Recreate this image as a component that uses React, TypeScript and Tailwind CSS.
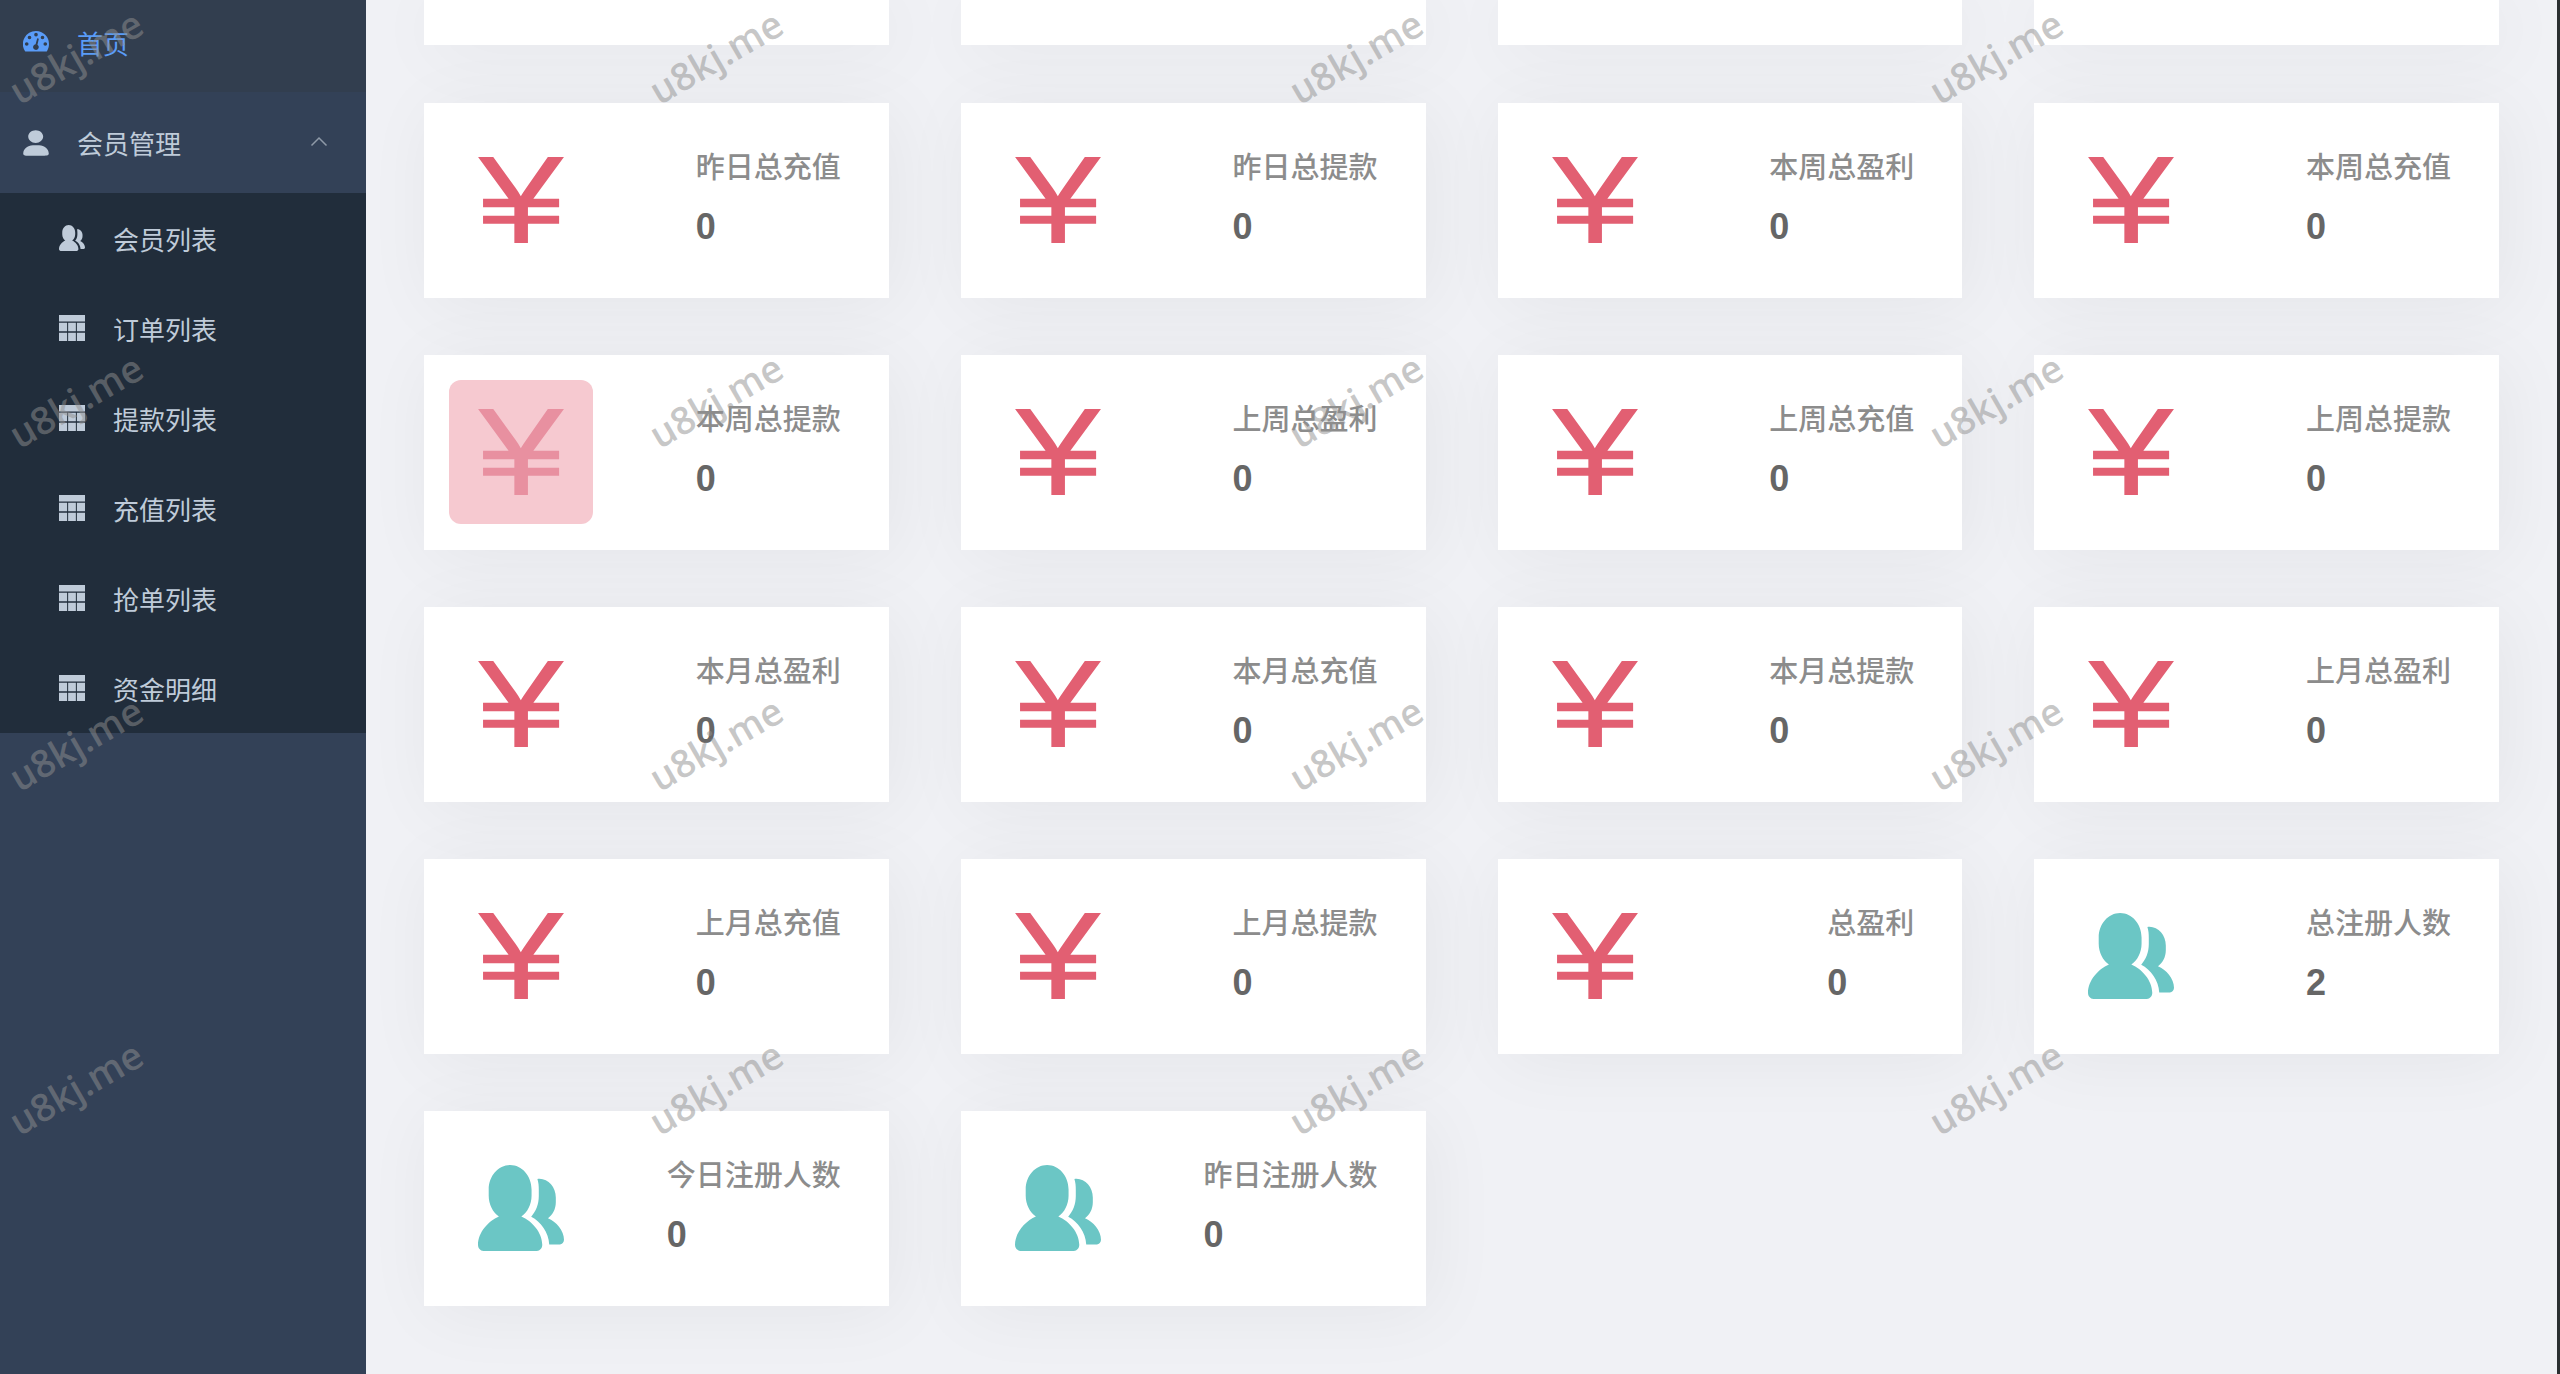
import type { ReactNode } from "react";

type IconProps = { className?: string };

function DashboardIcon({ className }: IconProps) {
  return (
    <svg viewBox="0 0 128 128" className={className} aria-hidden="true">
      <path
        fill="currentColor"
        fillRule="evenodd"
        d="M64 10a64 64 0 0 1 64 64c0 12.600-3.500 24.500-10.200 35-.9 1.400-2.200 2.100-3.900 2.100H14.100c-1.700 0-3-.7-3.900-2.100A64 64 0 0 1 64 10zM18.300 65a9 9 0 1 0 0 18 9 9 0 0 0 0-18zM32 33a9 9 0 1 0 0 18 9 9 0 0 0 0-18zM64 19a9 9 0 1 0 0 18 9 9 0 0 0 0-18zM96 33a9 9 0 1 0 0 18 9 9 0 0 0 0-18zM109.700 65a9 9 0 1 0 0 18 9 9 0 0 0 0-18zM70 46l-8 29a14 14 0 1 0 9 2L78 48z"
      />
    </svg>
  );
}

function UserIcon({ className }: IconProps) {
  return (
    <svg viewBox="0 0 130 130" className={className} aria-hidden="true">
      <path
        fill="currentColor"
        d="M63.444 64.996c20.633 0 37.359-14.308 37.359-31.953 0-17.649-16.726-31.952-37.359-31.952-20.631 0-37.360 14.303-37.360 31.952 0 17.645 16.729 31.953 37.360 31.953zM80.570 75.650H49.434c-26.652 0-48.260 18.477-48.260 41.270v2.664c0 9.316 21.608 9.325 48.260 9.325H80.570c26.649 0 48.256-.344 48.256-9.325v-2.663c0-22.794-21.605-41.271-48.256-41.271z"
      />
    </svg>
  );
}

function PeoplesIcon({ className }: IconProps) {
  return (
    <svg viewBox="0 0 128 128" className={className} aria-hidden="true">
      <path
        fill="currentColor"
        d="M95.648 118.762c0 5.035-3.563 9.121-7.979 9.121H7.980c-4.416 0-7.979-4.086-7.979-9.121C0 100.519 15.408 83.470 31.152 76.750c-9.099-6.430-15.216-17.863-15.216-30.987v-9.128c0-20.160 14.293-36.518 31.893-36.518s31.894 16.358 31.894 36.518v9.122c0 13.137-6.123 24.556-15.216 30.993 15.738 6.726 31.141 23.769 31.141 42.012z"
      />
      <path
        fill="currentColor"
        d="M106.032 118.252h15.867c3.376 0 6.101-3.125 6.101-6.972 0-13.957-11.787-26.984-23.819-32.123 6.955-4.919 11.638-13.660 11.638-23.690v-6.985c0-15.416-10.928-27.930-24.390-27.930-.974 0-1.745.037-3.003.200 1.683 5.298 2.060 10.213 2.060 16.428v9.122c0 12.600-4.200 22.500-11.300 30.600 14.300 7.200 26.100 23.200 26.846 41.350z"
      />
    </svg>
  );
}

function TableIcon({ className }: IconProps) {
  return (
    <svg viewBox="0 0 128 128" className={className} aria-hidden="true">
      <path
        fill="currentColor"
        d="M0 0h128v32H0zM0 38h40v42H0zM45 38h38v42H45zM88 38h40v42H88zM0 87h40v41H0zM45 87h38v41H45zM88 87h40v41H88z"
      />
    </svg>
  );
}

function MoneyIcon({ className }: IconProps) {
  return (
    <svg viewBox="0 0 128 128" className={className} aria-hidden="true">
      <path
        fill="currentColor"
        d="M54.122 127.892v-28.680H7.513V87.274h46.609v-12.400H7.513v-12.860h38.003L.099 0h22.600l32.556 45.070c3.617 5.144 6.440 9.611 8.487 13.385 1.788-3.050 4.890-7.779 9.301-14.186L103.930 0h24.010L82.385 62.013h38.340v12.862h-46.410v12.400h46.410v11.937h-46.410v28.680H54.123z"
      />
    </svg>
  );
}

type Stat = {
  label: string;
  value: number;
  kind: "money" | "people";
  active?: boolean;
};

const stats: Stat[] = [
  { label: "昨日总充值", value: 0, kind: "money" },
  { label: "昨日总提款", value: 0, kind: "money" },
  { label: "本周总盈利", value: 0, kind: "money" },
  { label: "本周总充值", value: 0, kind: "money" },
  { label: "本周总提款", value: 0, kind: "money", active: true },
  { label: "上周总盈利", value: 0, kind: "money" },
  { label: "上周总充值", value: 0, kind: "money" },
  { label: "上周总提款", value: 0, kind: "money" },
  { label: "本月总盈利", value: 0, kind: "money" },
  { label: "本月总充值", value: 0, kind: "money" },
  { label: "本月总提款", value: 0, kind: "money" },
  { label: "上月总盈利", value: 0, kind: "money" },
  { label: "上月总充值", value: 0, kind: "money" },
  { label: "上月总提款", value: 0, kind: "money" },
  { label: "总盈利", value: 0, kind: "money" },
  { label: "总注册人数", value: 2, kind: "people" },
  { label: "今日注册人数", value: 0, kind: "people" },
  { label: "昨日注册人数", value: 0, kind: "people" },
];

const memberLinks = [
  { label: "会员列表", icon: PeoplesIcon },
  { label: "订单列表", icon: TableIcon },
  { label: "提款列表", icon: TableIcon },
  { label: "充值列表", icon: TableIcon },
  { label: "抢单列表", icon: TableIcon },
  { label: "资金明细", icon: TableIcon },
];

function Panel({ children }: { children?: ReactNode }) {
  return (
    <div className="flex items-start justify-between bg-white shadow-[7px_7px_72px_rgba(0,0,0,0.05)]">
      {children}
    </div>
  );
}

function StatCard({ stat }: { stat: Stat }) {
  const Icon = stat.kind === "money" ? MoneyIcon : PeoplesIcon;
  const tone = stat.active
    ? "bg-[#f6c9d0] text-[#e890a0]"
    : stat.kind === "money"
      ? "text-[#e25f72]"
      : "text-[#6bc6c5]";

  return (
    <Panel>
      <div className={`mt-[25px] mb-[26px] ml-[25px] rounded-xl p-[29px] ${tone}`}>
        <Icon className="size-[86px]" />
      </div>
      <div className="mt-[49px] mr-12">
        <div className="mb-[18px] text-[29px] leading-8 font-medium text-[#8c8c8c]">{stat.label}</div>
        <span className="block text-[36px] leading-[50px] font-bold text-[#666]">{stat.value}</span>
      </div>
    </Panel>
  );
}

function Sidebar() {
  return (
    <nav className="w-[366px] shrink-0 bg-[#334157] text-[26px] text-[#bfcbd9]">
      <a href="#home" className="flex h-[92px] items-center gap-7 bg-[#323e4f] pb-2 pl-[23px] text-[#5a9cf8]">
        <DashboardIcon className="size-[26px]" />
        <span className="pt-1.5">首页</span>
      </a>
      <button type="button" aria-expanded="true" className="flex h-[101px] w-full items-center gap-7 pr-[38px] pl-[23px]">
        <UserIcon className="size-[26px]" />
        <span className="pt-1.5">会员管理</span>
        <svg viewBox="0 0 18 18" className="ml-auto size-[18px] text-[#8f9aa8]" aria-hidden="true">
          <path d="M1.500 11.500 9 4l7.500 7.500" fill="none" stroke="currentColor" strokeWidth="1.500" />
        </svg>
      </button>
      <ul className="bg-[#212d3b]">
        {memberLinks.map(({ label, icon: Icon }) => (
          <li key={label}>
            <a href="#members" className="flex h-[90px] items-center gap-7 pl-[59px]">
              <Icon className="size-[26px]" />
              <span className="pt-1.5">{label}</span>
            </a>
          </li>
        ))}
      </ul>
    </nav>
  );
}

function Watermark() {
  return (
    <div className="pointer-events-none absolute inset-0 grid grid-cols-4 grid-rows-4" aria-hidden="true">
      {Array.from({ length: 16 }, (_, i) => (
        <div key={i} className="flex items-start">
          <span className="mt-8 ml-0.5 -rotate-30 font-['Open_Sans'] text-[38px] leading-[48px] font-semibold text-[#909090]/50">
            u8kj.me
          </span>
        </div>
      ))}
    </div>
  );
}

export default function App() {
  return (
    <div className="relative flex min-h-screen overflow-hidden bg-[#f0f1f5] font-['Liberation_Sans','Noto_Sans_CJK_SC',sans-serif]">
      <Sidebar />
      <main className="min-w-0 flex-1 border-r-3 border-[#2b2f31] pr-[58px] pl-[58px]">
        {/* bottom edge of the row scrolled out of view */}
        <div className="grid h-[45px] grid-cols-4 gap-x-[72px]">
          <Panel />
          <Panel />
          <Panel />
          <Panel />
        </div>
        <div className="mt-[58px] grid grid-cols-4 gap-x-[72px] gap-y-[57px]">
          {stats.map(stat => (
            <StatCard key={stat.label} stat={stat} />
          ))}
        </div>
      </main>
      <Watermark />
    </div>
  );
}
